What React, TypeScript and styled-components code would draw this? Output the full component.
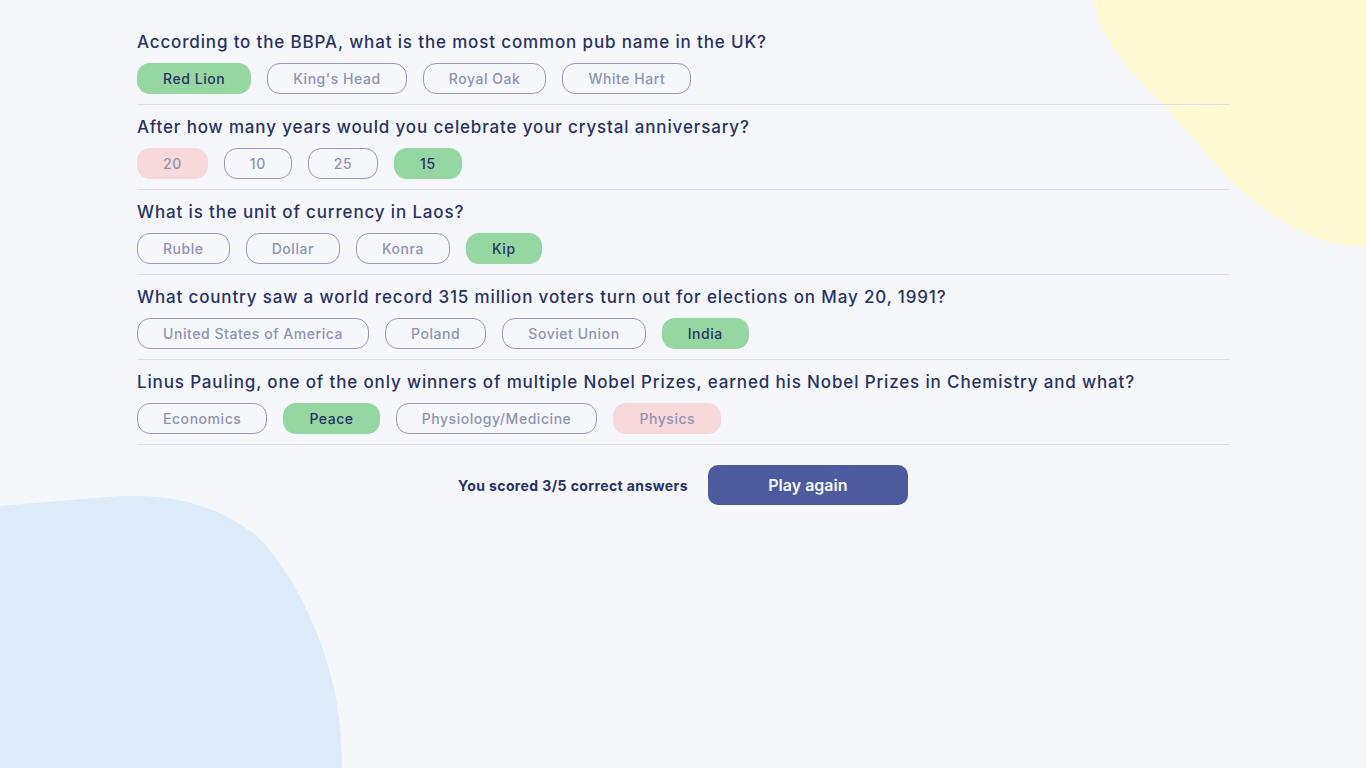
import styled, { createGlobalStyle } from "styled-components"

type Status = "correct" | "wrong" | "idle"

type Answer = { text: string; status: Status }

type Question = { question: string; answers: Answer[] }

const questions: Question[] = [
  {
    question: "According to the BBPA, what is the most common pub name in the UK?",
    answers: [
      { text: "Red Lion", status: "correct" },
      { text: "King's Head", status: "idle" },
      { text: "Royal Oak", status: "idle" },
      { text: "White Hart", status: "idle" },
    ],
  },
  {
    question: "After how many years would you celebrate your crystal anniversary?",
    answers: [
      { text: "20", status: "wrong" },
      { text: "10", status: "idle" },
      { text: "25", status: "idle" },
      { text: "15", status: "correct" },
    ],
  },
  {
    question: "What is the unit of currency in Laos?",
    answers: [
      { text: "Ruble", status: "idle" },
      { text: "Dollar", status: "idle" },
      { text: "Konra", status: "idle" },
      { text: "Kip", status: "correct" },
    ],
  },
  {
    question:
      "What country saw a world record 315 million voters turn out for elections on May 20, 1991?",
    answers: [
      { text: "United States of America", status: "idle" },
      { text: "Poland", status: "idle" },
      { text: "Soviet Union", status: "idle" },
      { text: "India", status: "correct" },
    ],
  },
  {
    question:
      "Linus Pauling, one of the only winners of multiple Nobel Prizes, earned his Nobel Prizes in Chemistry and what?",
    answers: [
      { text: "Economics", status: "idle" },
      { text: "Peace", status: "correct" },
      { text: "Physiology/Medicine", status: "idle" },
      { text: "Physics", status: "wrong" },
    ],
  },
]

const GlobalStyle = createGlobalStyle`
  html, body {
    margin: 0;
    background: #f5f7fb;
    font-family: Inter, "Liberation Sans", sans-serif;
    color: #293264;
  }
`

const Page = styled.main`
  position: relative;
  min-height: 768px;
  overflow: hidden;
`

const BlobTop = styled.svg`
  position: absolute;
  top: 0;
  right: 0;
  width: 273px;
  height: 246px;
`

const BlobBottom = styled.svg`
  position: absolute;
  left: 0;
  bottom: 0;
  width: 342px;
  height: 272px;
`

const Quiz = styled.div`
  position: relative;
  width: 1092px;
  margin: 0 auto;
  padding-top: 20px;
`

const Section = styled.section`
  padding: 12px 0 10px;
  border-bottom: 1px solid #dbdef0;
`

const Title = styled.h2`
  margin: 0 0 11px;
  font-size: 17px;
  line-height: 20px;
  font-weight: 500;
  letter-spacing: 0.85px;
  color: #293264;
`

const Options = styled.div`
  display: flex;
  gap: 16px;
`

const Option = styled.button<{ $status: Status }>`
  height: 31px;
  padding: 0 25px;
  border-radius: 13px;
  font-family: Inter, "Liberation Sans", sans-serif;
  font-size: 14px;
  font-weight: 500;
  letter-spacing: 0.55px;
  border: 1px solid
    ${({ $status }) => ($status === "idle" ? "#9499bf" : "transparent")};
  background: ${({ $status }) =>
    $status === "correct" ? "#94d7a2" : $status === "wrong" ? "#f6d9db" : "transparent"};
  color: ${({ $status }) => ($status === "correct" ? "#293264" : "#8f94af")};
`

const Footer = styled.div`
  display: flex;
  justify-content: center;
  align-items: center;
  gap: 20px;
  padding-top: 20px;
`

const Score = styled.span`
  font-size: 14px;
  font-weight: 700;
  letter-spacing: 0.4px;
  color: #293264;
`

const PlayButton = styled.button`
  width: 200px;
  height: 40px;
  border: none;
  border-radius: 10px;
  background: #4d5b9e;
  color: #f5f7fb;
  font-family: Inter, "Liberation Sans", sans-serif;
  font-size: 16px;
  font-weight: 600;
`

export default function App() {
  return (
    <Page>
      <GlobalStyle />
      <BlobTop viewBox="0 0 273 246">
        <path
          d="M0 0 C10 45 40 75 70 104 L137 180 C175 215 215 246 273 246 L273 0 Z"
          fill="#fffad1"
        />
      </BlobTop>
      <BlobBottom viewBox="0 0 342 272">
        <path
          d="M0 10 L120 0 C190 -3 230 20 253 37 C280 60 300 101 300 101 C325 150 342 200 342 272 L0 272 Z"
          fill="#deebf8"
        />
      </BlobBottom>
      <Quiz>
        {questions.map((q) => (
          <Section key={q.question}>
            <Title>{q.question}</Title>
            <Options>
              {q.answers.map((a) => (
                <Option key={a.text} $status={a.status}>
                  {a.text}
                </Option>
              ))}
            </Options>
          </Section>
        ))}
        <Footer>
          <Score>You scored 3/5 correct answers</Score>
          <PlayButton>Play again</PlayButton>
        </Footer>
      </Quiz>
    </Page>
  )
}
